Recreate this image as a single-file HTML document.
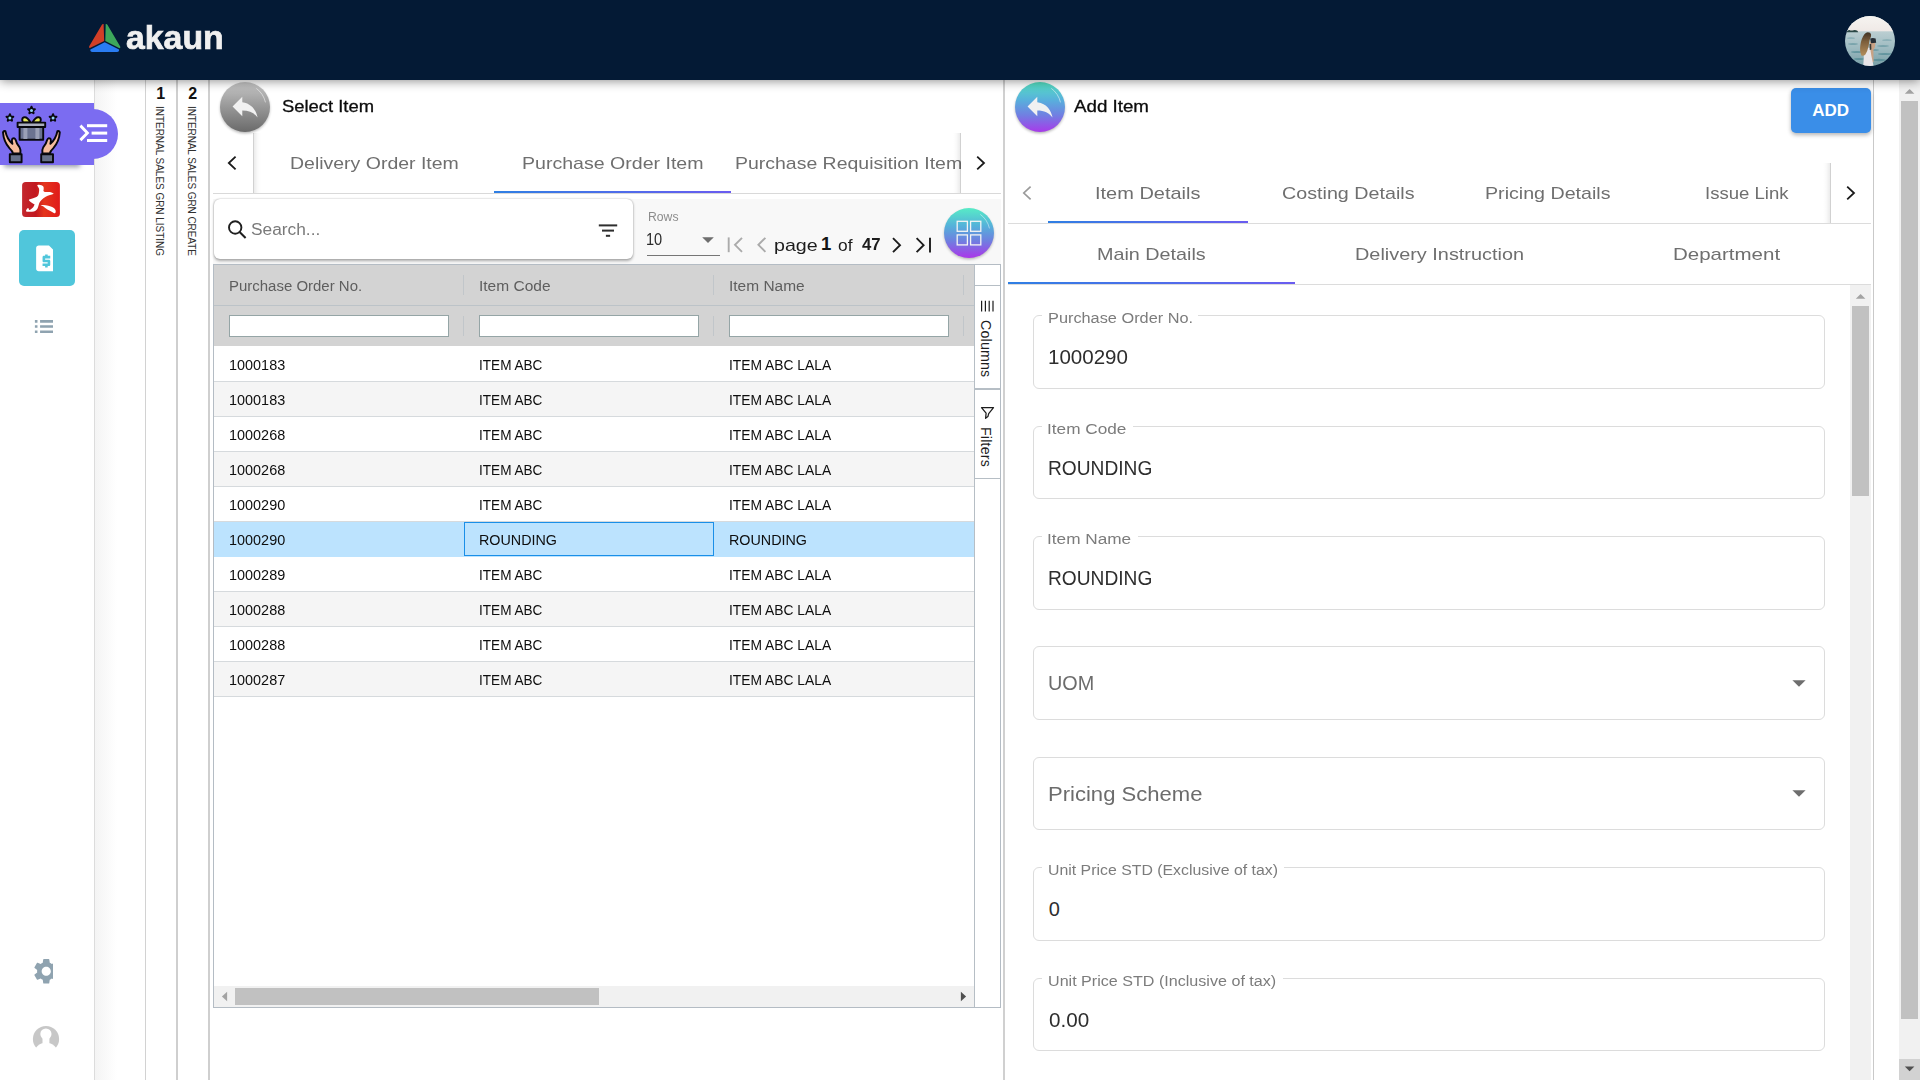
<!DOCTYPE html>
<html lang="en">
<head>
<meta charset="utf-8">
<title>akaun - Internal Sales GRN</title>
<style>
*{box-sizing:border-box;margin:0;padding:0}
html,body{width:1920px;height:1080px;overflow:hidden;background:#fff}
body{position:relative;font-family:"Liberation Sans",sans-serif;color:#222}
.abs{position:absolute}
.t{position:absolute;white-space:nowrap;transform-origin:0 0}
#hdr{left:0;top:0;width:1920px;height:80px;background:#041a35;box-shadow:0 1px 10px rgba(0,0,0,.45);z-index:20}
#side{left:0;top:80px;width:95px;height:1000px;background:#fff;border-right:1px solid #dcdcdc}
#gap{left:95px;top:80px;width:50px;height:1000px;background:linear-gradient(90deg,#f4f4f4 0,#fff 22px)}
.vline{position:absolute;top:80px;height:1000px;background:#cfcfcf}
.vtxt{position:absolute;writing-mode:vertical-rl;white-space:nowrap;font-size:10px;color:#303030;line-height:1}
.vnum{position:absolute;font-weight:700;font-size:16px;color:#111;line-height:1}
.circ{position:absolute;width:50px;height:50px;border-radius:50%;box-shadow:0 2px 4px rgba(0,0,0,.3)}
.hline{position:absolute;height:1px;background:#dcdcdc}
.ink{position:absolute;height:2.4px;background:linear-gradient(90deg,#2f7fe3,#6a5cf0)}
.row{position:absolute;left:214px;width:760px;height:35px;border-bottom:1px solid #d6dadd;background:#fff}
.row.alt{background:#f5f5f5}
.row.sel{background:#bce3fe;border-bottom-color:#bce3fe}
.gsep{position:absolute;width:1px;background:#c1c6ca}
.gin{position:absolute;height:22px;width:220px;background:#fff;border:1px solid #95a5a6}
.fld{position:absolute;left:1033px;width:792px;height:73px;border:1px solid #dcdcdc;border-radius:6px;background:#fff}
.notch{position:absolute;height:3px;background:#fff}
.caret{position:absolute;width:0;height:0;border-left:6.5px solid transparent;border-right:6.5px solid transparent;border-top:6.2px solid #707070}
</style>
</head>
<body>

<!-- ===== HEADER ===== -->
<div id="hdr" class="abs">
  <svg class="abs" style="left:86px;top:20px" width="38" height="36" viewBox="86 20 38 36">
    <path d="M103.600 24 Q102.500 23.700 101.900 24.800 L89.200 46.200 Q88.600 47.700 89.900 47.900 L104.200 41.100 Z" fill="#d23f27"/>
    <path d="M105.700 24 Q106.800 23.700 107.400 24.800 L120.200 46.600 Q120.800 48.100 119.500 48.300 L105.300 41.100 Z" fill="#3da85b"/>
    <path d="M104.700 42.300 L119 49.500 Q119.500 51.900 117 51.900 L92.400 51.900 Q89.900 51.900 90.400 49.500 Z" fill="#2a7cf2"/>
  </svg>
  <div class="t" style="left:125.50px;top:21.37px;font-size:33px;line-height:33px;color:#f0f0f0;transform:scaleX(1.0242);font-weight:700;-webkit-text-stroke:.7px #f0f0f0;">akaun</div>
  <svg class="abs" style="left:1845px;top:16px" width="50" height="50" viewBox="0 0 50 50">
    <defs>
      <clipPath id="avc"><circle cx="25" cy="25" r="25"/></clipPath>
      <linearGradient id="sky" x1="0" y1="0" x2="0" y2="1"><stop offset="0" stop-color="#f6f4f1"/><stop offset="1" stop-color="#efe9e6"/></linearGradient>
      <linearGradient id="sea" x1="0" y1="0" x2="0" y2="1"><stop offset="0" stop-color="#d6e1e2"/><stop offset=".3" stop-color="#bccfd2"/><stop offset=".65" stop-color="#9dbac0"/><stop offset="1" stop-color="#789fa7"/></linearGradient>
      <linearGradient id="hair" x1="0" y1="0" x2="0" y2="1"><stop offset="0" stop-color="#3f3123"/><stop offset=".4" stop-color="#7d5f3c"/><stop offset="1" stop-color="#b38d5b"/></linearGradient>
      <filter id="avb" x="-10%" y="-10%" width="120%" height="120%"><feGaussianBlur stdDeviation=".55"/></filter>
    </defs>
    <g clip-path="url(#avc)">
      <rect width="50" height="50" fill="url(#sea)"/>
      <rect width="50" height="15.300" fill="url(#sky)"/>
      <g filter="url(#avb)">
        <path d="M1.500 16.200 Q2 14 4.500 14 Q6 14.900 7.500 14.400 Q10 13.200 12.400 14.800 L13.200 16.300 Z" fill="#2a4644"/>
        <g fill="#3f7f8a" opacity=".55">
          <ellipse cx="8" cy="28" rx="5" ry=".7"/><ellipse cx="38" cy="30" rx="6" ry=".8"/><ellipse cx="12" cy="36" rx="6" ry="1"/>
          <ellipse cx="40" cy="38" rx="7" ry="1.100"/><ellipse cx="34" cy="44" rx="7" ry="1.200"/><ellipse cx="14" cy="43" rx="5" ry="1"/>
          <ellipse cx="42" cy="24" rx="5" ry=".6"/><ellipse cx="6" cy="22" rx="4" ry=".5"/><ellipse cx="30" cy="34" rx="4" ry=".7"/>
        </g>
        <path d="M27 24 L30.400 26.500 L30 31 L28.400 34 L28.600 46 L25.600 47 L24.600 33 L25 26 Z" fill="#c9a284"/>
        <path d="M18.600 33 Q22 30.500 25.200 32.500 L26.400 40 L28.600 50 L18.200 50 L18.800 42 Z" fill="#e9e5e8"/>
        <path d="M19.600 18 Q22 15.200 25 16.800 Q26.600 17.800 26 20.500 L24.600 24 Q24 27 23.600 30 Q22.600 35 20.400 38.500 Q18.400 40.500 16.400 39.500 Q14.400 35 15.400 29 Q16.400 22 19.600 18 Z" fill="url(#hair)"/>
        <path d="M25.200 22.400 Q28 21.300 30.600 22.600 L31.200 26.800 L26 27.200 Z" fill="#272f36"/>
        <path d="M24.600 28 L26.200 28 L26.400 33.500 L24.800 34 Z" fill="#3a3a36"/>
      </g>
    </g>
  </svg>
</div>

<!-- ===== SIDEBAR ===== -->
<div id="side" class="abs"></div>
<div id="gap" class="abs"></div>
<div class="vline" style="left:145px;width:1px;background:#d2d2d2"></div>
<div class="vline" style="left:176px;width:2px"></div>
<div class="vline" style="left:208px;width:2px"></div>
<div class="vline" style="left:1003px;width:2px;background:#d0d0d0"></div>
<div class="vline" style="left:1873px;width:1px;background:#c9c9c9"></div>
<div class="vnum" style="left:156.2px;top:85.5px">1</div>
<div class="vtxt" style="left:153.9px;top:105.9px;letter-spacing:-0.03px">INTERNAL SALES GRN LISTING</div>
<div class="vnum" style="left:188.3px;top:85.5px">2</div>
<div class="vtxt" style="left:185.5px;top:105.9px;letter-spacing:-0.075px">INTERNAL SALES GRN CREATE</div>
<div class="abs" style="left:4px;top:150px;width:76px;height:15px;box-shadow:0 2px 5px rgba(60,70,95,.55)"></div>
<div class="abs" style="left:68px;top:109px;width:50px;height:50px;border-radius:50%;background:#7b6cf1"></div>
<div class="abs" style="left:0;top:103px;width:94px;height:62px;background:#7b6cf1"></div>
<svg class="abs" style="left:0;top:103px" width="120" height="62" viewBox="0 0 120 62">
  <!-- toggle icon -->
  <g fill="#fff">
    <rect x="87" y="21.2" width="20.2" height="3"/>
    <rect x="91.6" y="28.6" width="15.6" height="3"/>
    <rect x="87" y="36" width="20.2" height="3"/>
    <path d="M81.4 21.6 L89.4 29.9 L81.4 38.2 L79.4 36.1 L85.4 29.9 L79.4 23.7 Z"/>
  </g>
  <!-- gift with hands -->
  <g stroke="#08080e" stroke-width="1.9" stroke-linejoin="round" stroke-linecap="round">
    <path d="M31.50 3.80 L32.41 6.05 L34.83 6.22 L32.97 7.78 L33.56 10.13 L31.50 8.85 L29.44 10.13 L30.03 7.78 L28.17 6.22 L30.59 6.05 Z" fill="#86cdf0" stroke-width="2.1"/>
    <path d="M9.90 11.30 L10.81 13.55 L13.23 13.72 L11.37 15.28 L11.96 17.63 L9.90 16.35 L7.84 17.63 L8.43 15.28 L6.57 13.72 L8.99 13.55 Z" fill="#86cdf0" stroke-width="2.1"/>
    <path d="M53.05 11.30 L53.96 13.55 L56.38 13.72 L54.52 15.28 L55.11 17.63 L53.05 16.35 L50.99 17.63 L51.58 15.28 L49.72 13.72 L52.14 13.55 Z" fill="#86cdf0" stroke-width="2.1"/>
    <path d="M30.600 19.400 Q27 13.200 23.600 14.400 Q21.200 15.800 23 19.400 Z" fill="#e8ea5a"/>
    <path d="M32.400 19.400 Q36 13.200 39.400 14.400 Q41.800 15.800 40 19.400 Z" fill="#e8ea5a"/>
    <rect x="17.6" y="19.6" width="27.6" height="4.4" fill="#a9adbd"/>
    <rect x="19.6" y="24" width="23.6" height="12.8" fill="#6b7390"/>
    <path d="M3 29.4 Q3.6 27.6 5.4 28.2 Q7 36 12.4 40.8 Q11.4 36.6 12.6 35.6 Q14.6 34.6 15.6 36.8 Q16.4 40.6 19.6 44.4 Q21 47 20.4 50.4 L13 50.4 Q12.4 48 9.6 45.4 Q3.6 38.6 3 29.4 Z" fill="#f6bd9c"/>
    <path d="M59.8 29.4 Q59.2 27.6 57.4 28.2 Q55.8 36 50.4 40.8 Q51.4 36.6 50.2 35.6 Q48.2 34.6 47.2 36.8 Q46.4 40.6 43.2 44.4 Q41.8 47 42.4 50.4 L49.8 50.4 Q50.4 48 53.2 45.4 Q59.2 38.6 59.8 29.4 Z" fill="#f6bd9c"/>
    <rect x="9.8" y="51.2" width="11.8" height="8" fill="#667089"/>
    <rect x="41.2" y="51.2" width="11.8" height="8" fill="#667089"/>
  </g>
  <g fill="#8fd2f2"><circle cx="31.500" cy="7.400" r="1.500"/><circle cx="9.900" cy="14.900" r="1.500"/><circle cx="53.050" cy="14.900" r="1.500"/></g>
  <g fill="#9aa0b6"><rect x="23.4" y="25" width="4" height="11"/><rect x="35.4" y="25" width="4" height="11"/></g>
</svg>

<!-- red app icon -->
<svg class="abs" style="left:22px;top:181.600px" width="38" height="36" viewBox="0 0 38 36">
  <defs><linearGradient id="rg" x1="0" y1="0" x2="1" y2="0"><stop offset="0" stop-color="#c3282e"/><stop offset=".36" stop-color="#c2181f"/><stop offset=".58" stop-color="#e4351c"/><stop offset="1" stop-color="#e01a1a"/></linearGradient></defs>
  <rect x=".1" y=".1" width="37.800" height="35" rx="3.600" fill="url(#rg)"/>
  <path d="M15.200 3.400 Q15.500 2.400 17 2.700 L19.500 3.200 Q21.300 3.800 21.600 4.900 Q21.900 6.800 21.400 8.700 Q21.600 9.800 22.900 10 L28 10 Q30.400 10.500 31.800 11.700 Q30 12.500 28 13 Q25.600 13.700 23.700 14.700 Q21.200 16.200 19.500 18.100 Q18 19.600 17.300 21.100 Q16.700 23 16.100 24.900 Q15.600 26.800 14.400 27.900 Q13.200 29 11.800 29.400 Q10 29.800 8 29.800 L4.600 29.800 Q3.800 29.200 4.100 28.300 L5.200 26.600 Q5.900 25.900 6.500 26.200 L7.100 28.100 Q8.300 27.800 9.200 27 Q10.500 26 11.400 24.900 L12.600 22.600 Q11.200 21.600 10.100 21.100 Q8.500 20.200 7.500 19 Q6.700 18.200 6.900 17.700 Q7.700 17.200 8.800 17 Q11.200 16.400 13.100 15.500 Q15.200 14.600 16.100 13.400 Q16.800 12 16.900 10.400 Q17.300 8.600 17.100 7 Q16.800 5.800 16.100 4.900 Z" fill="#fff"/>
  <path d="M18.400 23.200 Q21 22.800 23.700 23.200 Q26.400 23.600 28.800 24.500 Q30.800 25.200 32.200 26.200 Q33.400 27.300 33.700 28.700 Q33.900 30 33.300 30.900 Q32.600 31.400 31.800 31.100 L28.800 29.200 L25.400 27.500 Q23.600 26.300 22 24.900 Q21.200 24.400 20.300 24.100 Z" fill="#fff"/>
</svg>

<!-- teal doc tile -->
<div class="abs" style="left:19px;top:230px;width:56px;height:56px;border-radius:5px;background:#50c6db"></div>
<div class="abs" style="left:30.700px;top:242.900px;width:22.400px;height:32px;overflow:hidden">
<svg class="abs" style="left:0;top:0" width="30.800" height="30.800" viewBox="0 0 24 24">
  <path fill="#fff" d="M14 2H6c-1.100 0-2 .9-2 2v16c0 1.100.9 2 2 2h12c1.100 0 2-.9 2-2V8l-6-6zm1 10h-4v1h3c.55 0 1 .45 1 1v3c0 .55-.45 1-1 1h-1v1h-2v-1H9v-2h4v-1h-3c-.55 0-1-.45-1-1v-3c0-.55.45-1 1-1h1V9h2v1h2v2z"/>
</svg>
</div>

<!-- list icon -->
<div class="abs" style="left:30.600px;top:310.700px;width:22.500px;height:32px;overflow:hidden">
<svg class="abs" style="left:0;top:0" width="31.100" height="31.100" viewBox="0 0 24 24">
  <path fill="#8fa3b0" d="M3 13h2v-2H3v2zm0 4h2v-2H3v2zm0-8h2V7H3v2zm4 4h14v-2H7v2zm0 4h14v-2H7v2zM7 7v2h14V7H7z"/>
</svg>
</div>

<!-- gear -->
<div class="abs" style="left:30.600px;top:955.700px;width:22.500px;height:31px;overflow:hidden">
<svg class="abs" style="left:0;top:0" width="30.500" height="30.500" viewBox="0 0 24 24">
  <path fill="#8fa3b0" d="M19.14 12.94c.04-.3.06-.61.06-.94 0-.32-.02-.64-.07-.94l2.03-1.58a.49.49 0 0 0 .12-.61l-1.92-3.32a.488.488 0 0 0-.59-.22l-2.39.96c-.5-.38-1.03-.7-1.62-.94l-.36-2.54a.484.484 0 0 0-.48-.41h-3.84c-.24 0-.43.17-.47.41l-.36 2.54c-.59.24-1.13.57-1.62.94l-2.39-.96c-.22-.08-.47 0-.59.22L2.74 8.87c-.12.21-.08.47.12.61l2.03 1.58c-.05.3-.09.63-.09.94s.02.64.07.94l-2.03 1.58a.49.49 0 0 0-.12.61l1.92 3.32c.12.22.37.29.59.22l2.39-.96c.5.38 1.03.7 1.62.94l.36 2.54c.05.24.24.41.48.41h3.84c.24 0 .44-.17.47-.41l.36-2.54c.59-.24 1.13-.56 1.62-.94l2.39.96c.22.08.47 0 .59-.22l1.92-3.32c.12-.22.07-.47-.12-.61l-2.01-1.58zM12 15.6c-1.98 0-3.600-1.620-3.600-3.600s1.620-3.600 3.600-3.600 3.600 1.620 3.600 3.600-1.620 3.600-3.600 3.600z"/>
</svg>
</div>

<!-- user -->
<svg class="abs" style="left:32px;top:1025px" width="28" height="24" viewBox="32 1025 28 24">
  <defs><clipPath id="uc"><rect x="32" y="1025" width="28" height="22.900"/></clipPath></defs>
  <g clip-path="url(#uc)">
    <circle cx="46" cy="1039" r="13.100" fill="#c7c7c7"/>
    <circle cx="45.900" cy="1034" r="5.600" fill="#fff"/>
    <rect x="42.500" y="1036" width="6.900" height="9" fill="#fff"/>
    <ellipse cx="46" cy="1054" rx="12" ry="11.200" fill="#fff"/>
  </g>
</svg>

<!-- ===== LEFT PANEL : SELECT ITEM ===== -->
<div class="abs" style="left:213px;top:199px;width:788px;height:66px;background:#f8f8f8"></div>
<svg class="abs" style="left:216px;top:79px" width="58" height="60" viewBox="0 0 58 60">
  <defs><linearGradient id="gbk" x1="0" y1="0" x2="0" y2="1"><stop offset="0" stop-color="#c6c6c6"/><stop offset="0.45" stop-color="#9c9c9c"/><stop offset="1" stop-color="#6a6a6a"/></linearGradient>
  <filter id="gbks" x="-20%" y="-20%" width="140%" height="150%"><feGaussianBlur stdDeviation="1.6"/></filter></defs>
  <circle cx="29" cy="29.6" r="24.6" fill="#000" opacity=".32" filter="url(#gbks)"/>
  <circle cx="29" cy="28" r="25" fill="url(#gbk)"/>
  <path d="M40.6 9.6 Q47.4 14.6 49.4 23" fill="none" stroke="#fff" stroke-opacity=".5" stroke-width="1" stroke-linecap="round"/>
  <g transform="translate(12.4 10.8) scale(1.389)"><path d="M10 9V5l-7 7 7 7v-4.1c5 0 8.5 1.6 11 5.1-1-5-4-10-11-11z" fill="#f1f1f1"/></g>
</svg>

<div class="t" style="left:282.20px;top:98.01px;font-size:17px;line-height:17px;color:#0c0c0c;transform:scaleX(1.0816);-webkit-text-stroke:.3px #0c0c0c;">Select Item</div>
<div class="hline" style="left:213px;top:193px;width:788px;background:#d9d9d9"></div>
<div class="abs" style="left:252.800px;top:133px;width:8px;height:60px;background:linear-gradient(90deg,rgba(0,0,0,.24),rgba(0,0,0,.07) 18%,rgba(0,0,0,.02) 60%,rgba(0,0,0,0))"></div>
<svg class="abs" style="left:226px;top:155px" width="12" height="16" viewBox="0 0 12 16"><path d="M9.6 1.6 L2.8 8 L9.6 14.4" fill="none" stroke="#1a1a1a" stroke-width="1.8"/></svg>
<div class="t" style="left:290.35px;top:154.61px;font-size:17px;line-height:17px;color:#6f6f6f;transform:scaleX(1.1457);">Delivery Order Item</div>
<div class="t" style="left:521.60px;top:154.61px;font-size:17px;line-height:17px;color:#6f6f6f;transform:scaleX(1.1502);">Purchase Order Item</div>
<div class="abs" style="left:720px;top:140px;width:241px;height:50px;overflow:hidden"><div class="t" style="left:15.16px;top:14.61px;font-size:17px;line-height:17px;color:#6f6f6f;transform:scaleX(1.1446);">Purchase Requisition Item</div></div>
<div class="ink" style="left:494px;top:190.8px;width:237.4px"></div>
<div class="abs" style="left:953.200px;top:133px;width:8px;height:60px;background:linear-gradient(270deg,rgba(0,0,0,.24),rgba(0,0,0,.07) 18%,rgba(0,0,0,.02) 60%,rgba(0,0,0,0))"></div>
<div class="abs" style="left:961.200px;top:133px;width:39.800px;height:60px;background:#fff"></div>
<svg class="abs" style="left:974px;top:155px" width="13" height="16" viewBox="0 0 13 16"><path d="M3.2 1.6 L10 8 L3.2 14.4" fill="none" stroke="#1a1a1a" stroke-width="1.8"/></svg>
<div class="abs" style="left:214px;top:198.6px;width:419.4px;height:60.8px;background:#fff;border-radius:6px;box-shadow:0 1.5px 3px rgba(0,0,0,.3),0 0 1.5px rgba(0,0,0,.25)"></div>
<svg class="abs" style="left:226px;top:218px" width="22" height="22" viewBox="0 0 22 22"><circle cx="9.2" cy="9.5" r="6.2" fill="none" stroke="#1f1f1f" stroke-width="1.9"/><path d="M13.6 14 L19.6 20" stroke="#1f1f1f" stroke-width="2.1" fill="none"/></svg>
<div class="t" style="left:250.80px;top:222.06px;font-size:16px;line-height:16px;color:#7a7a7a;transform:scaleX(1.0817);">Search...</div>
<svg class="abs" style="left:598px;top:223px" width="20" height="15" viewBox="0 0 20 15"><g fill="#2e2e2e"><rect x=".8" y="1.4" width="18.4" height="2"/><rect x="4" y="6.6" width="12" height="2"/><rect x="7.9" y="11.8" width="4.2" height="2"/></g></svg>
<div class="t" style="left:647.50px;top:210.84px;font-size:12px;line-height:12px;color:#8c8c8c;transform:scaleX(1.0165);">Rows</div>
<div class="t" style="left:646.09px;top:232.06px;font-size:16px;line-height:16px;color:#2b2b2b;transform:scaleX(0.9113);">10</div>
<svg class="abs" style="left:701px;top:236px" width="14" height="8" viewBox="0 0 14 8"><path d="M1.200 1.200 H12.800 L7 7 Z" fill="#6e6e6e"/></svg>
<div class="abs" style="left:647.4px;top:254.9px;width:72.6px;height:1px;background:#767676"></div>
<svg class="abs" style="left:725px;top:235px" width="210" height="20" viewBox="0 0 210 20">
  <g fill="none" stroke="#ababab" stroke-width="1.9">
    <path d="M3.7 2.4 V17.2"/><path d="M17 2.8 L10 9.8 L17 16.8"/>
    <path d="M40.4 2.8 L33.4 9.8 L40.4 16.8"/>
  </g>
  <g fill="none" stroke="#1c1c1c" stroke-width="1.9">
    <path d="M168 3.2 L175 10.2 L168 17.2"/>
    <path d="M191.600 3.200 L198.600 10.200 L191.600 17.200"/><path d="M205 2.800 V17.600"/>
  </g>
</svg>
<div class="t" style="left:773.85px;top:236.61px;font-size:17px;line-height:17px;color:#1c1c1c;transform:scaleX(1.1550);">page</div>
<div class="t" style="left:821.00px;top:235.14px;font-size:18.5px;line-height:18.5px;color:#141414;font-weight:700;">1</div>
<div class="t" style="left:838.00px;top:236.61px;font-size:17px;line-height:17px;color:#1c1c1c;transform:scaleX(1.0204);">of</div>
<div class="t" style="left:862.25px;top:237.46px;font-size:16px;line-height:16px;color:#1c1c1c;transform:scaleX(1.0476);font-weight:700;">47</div>
<svg class="abs" style="left:940px;top:205px" width="58" height="60" viewBox="0 0 58 60">
  <defs><linearGradient id="ggr" x1="0" y1="0" x2="0" y2="1"><stop offset="0" stop-color="#57ecc6"/><stop offset=".36" stop-color="#55b1da"/><stop offset=".66" stop-color="#6f7fe0"/><stop offset="1" stop-color="#ab36ea"/></linearGradient>
  <filter id="ggs" x="-20%" y="-20%" width="140%" height="150%"><feGaussianBlur stdDeviation="1.6"/></filter></defs>
  <circle cx="29" cy="29.6" r="24.6" fill="#000" opacity=".3" filter="url(#ggs)"/>
  <circle cx="29" cy="28" r="25" fill="url(#ggr)"/>
  <path d="M40.6 9.6 Q47.4 14.6 49.4 23" fill="none" stroke="#fff" stroke-opacity=".45" stroke-width="1" stroke-linecap="round"/>
  <g fill="none" stroke="#f4f4f4" stroke-width="1.3">
    <rect x="17.2" y="16.3" width="10.2" height="10"/><rect x="30.6" y="16.3" width="10.2" height="10"/>
    <rect x="17.2" y="29.900" width="10.2" height="10"/><rect x="30.6" y="29.900" width="10.2" height="10"/>
  </g>
</svg>
<div class="abs" style="left:213.0px;top:263.9px;width:787.9px;height:743.9px;border:1px solid #b4bcc4;background:#fff"></div>
<div class="abs" style="left:214px;top:264.9px;width:760.2px;height:81.6px;background:#d3d3d3"></div>
<div class="abs" style="left:214px;top:305px;width:760.2px;height:1px;background:#bcc3c8"></div>
<div class="t" style="left:228.73px;top:278.56px;font-size:14.7px;line-height:14.7px;color:#5e5e5e;transform:scaleX(1.0192);">Purchase Order No.</div>
<div class="gin" style="left:229.05px;top:314.9px"></div>
<div class="t" style="left:478.69px;top:278.56px;font-size:14.7px;line-height:14.7px;color:#5e5e5e;transform:scaleX(1.0557);">Item Code</div>
<div class="gin" style="left:479.05px;top:314.9px"></div>
<div class="t" style="left:728.70px;top:278.56px;font-size:14.7px;line-height:14.7px;color:#5e5e5e;transform:scaleX(1.0530);">Item Name</div>
<div class="gin" style="left:729.05px;top:314.9px"></div>
<div class="gsep" style="left:463px;top:275.3px;height:19.6px"></div>
<div class="gsep" style="left:463px;top:316px;height:19.600px"></div>
<div class="gsep" style="left:713px;top:275.3px;height:19.6px"></div>
<div class="gsep" style="left:713px;top:316px;height:19.600px"></div>
<div class="gsep" style="left:963px;top:275.3px;height:19.6px"></div>
<div class="gsep" style="left:963px;top:316px;height:19.600px"></div>
<div class="row" style="left:214px;top:346.50px"></div>
<div class="t" style="left:228.54px;top:357.30px;font-size:15px;line-height:15px;color:#0e0e0e;transform:scaleX(0.9623);">1000183</div>
<div class="t" style="left:478.69px;top:357.30px;font-size:15px;line-height:15px;color:#0e0e0e;transform:scaleX(0.9056);">ITEM ABC</div>
<div class="t" style="left:728.68px;top:357.30px;font-size:15px;line-height:15px;color:#0e0e0e;transform:scaleX(0.9214);">ITEM ABC LALA</div>
<div class="row alt" style="left:214px;top:381.50px"></div>
<div class="t" style="left:228.54px;top:392.30px;font-size:15px;line-height:15px;color:#0e0e0e;transform:scaleX(0.9623);">1000183</div>
<div class="t" style="left:478.69px;top:392.30px;font-size:15px;line-height:15px;color:#0e0e0e;transform:scaleX(0.9056);">ITEM ABC</div>
<div class="t" style="left:728.68px;top:392.30px;font-size:15px;line-height:15px;color:#0e0e0e;transform:scaleX(0.9214);">ITEM ABC LALA</div>
<div class="row" style="left:214px;top:416.50px"></div>
<div class="t" style="left:228.54px;top:427.30px;font-size:15px;line-height:15px;color:#0e0e0e;transform:scaleX(0.9623);">1000268</div>
<div class="t" style="left:478.69px;top:427.30px;font-size:15px;line-height:15px;color:#0e0e0e;transform:scaleX(0.9056);">ITEM ABC</div>
<div class="t" style="left:728.68px;top:427.30px;font-size:15px;line-height:15px;color:#0e0e0e;transform:scaleX(0.9214);">ITEM ABC LALA</div>
<div class="row alt" style="left:214px;top:451.50px"></div>
<div class="t" style="left:228.54px;top:462.30px;font-size:15px;line-height:15px;color:#0e0e0e;transform:scaleX(0.9623);">1000268</div>
<div class="t" style="left:478.69px;top:462.30px;font-size:15px;line-height:15px;color:#0e0e0e;transform:scaleX(0.9056);">ITEM ABC</div>
<div class="t" style="left:728.68px;top:462.30px;font-size:15px;line-height:15px;color:#0e0e0e;transform:scaleX(0.9214);">ITEM ABC LALA</div>
<div class="row" style="left:214px;top:486.50px"></div>
<div class="t" style="left:228.54px;top:497.30px;font-size:15px;line-height:15px;color:#0e0e0e;transform:scaleX(0.9623);">1000290</div>
<div class="t" style="left:478.69px;top:497.30px;font-size:15px;line-height:15px;color:#0e0e0e;transform:scaleX(0.9056);">ITEM ABC</div>
<div class="t" style="left:728.68px;top:497.30px;font-size:15px;line-height:15px;color:#0e0e0e;transform:scaleX(0.9214);">ITEM ABC LALA</div>
<div class="row alt sel" style="left:214px;top:521.50px"></div>
<div class="abs" style="left:464px;top:521.80px;width:250px;height:34.4px;border:1px solid #1a8fe8"></div>
<div class="t" style="left:228.54px;top:532.30px;font-size:15px;line-height:15px;color:#0e0e0e;transform:scaleX(0.9623);">1000290</div>
<div class="t" style="left:478.64px;top:532.30px;font-size:15px;line-height:15px;color:#0e0e0e;transform:scaleX(0.9550);">ROUNDING</div>
<div class="t" style="left:728.64px;top:532.30px;font-size:15px;line-height:15px;color:#0e0e0e;transform:scaleX(0.9550);">ROUNDING</div>
<div class="row" style="left:214px;top:556.50px"></div>
<div class="t" style="left:228.54px;top:567.30px;font-size:15px;line-height:15px;color:#0e0e0e;transform:scaleX(0.9623);">1000289</div>
<div class="t" style="left:478.69px;top:567.30px;font-size:15px;line-height:15px;color:#0e0e0e;transform:scaleX(0.9056);">ITEM ABC</div>
<div class="t" style="left:728.68px;top:567.30px;font-size:15px;line-height:15px;color:#0e0e0e;transform:scaleX(0.9214);">ITEM ABC LALA</div>
<div class="row alt" style="left:214px;top:591.50px"></div>
<div class="t" style="left:228.54px;top:602.30px;font-size:15px;line-height:15px;color:#0e0e0e;transform:scaleX(0.9623);">1000288</div>
<div class="t" style="left:478.69px;top:602.30px;font-size:15px;line-height:15px;color:#0e0e0e;transform:scaleX(0.9056);">ITEM ABC</div>
<div class="t" style="left:728.68px;top:602.30px;font-size:15px;line-height:15px;color:#0e0e0e;transform:scaleX(0.9214);">ITEM ABC LALA</div>
<div class="row" style="left:214px;top:626.50px"></div>
<div class="t" style="left:228.54px;top:637.30px;font-size:15px;line-height:15px;color:#0e0e0e;transform:scaleX(0.9623);">1000288</div>
<div class="t" style="left:478.69px;top:637.30px;font-size:15px;line-height:15px;color:#0e0e0e;transform:scaleX(0.9056);">ITEM ABC</div>
<div class="t" style="left:728.68px;top:637.30px;font-size:15px;line-height:15px;color:#0e0e0e;transform:scaleX(0.9214);">ITEM ABC LALA</div>
<div class="row alt" style="left:214px;top:661.50px"></div>
<div class="t" style="left:228.54px;top:672.30px;font-size:15px;line-height:15px;color:#0e0e0e;transform:scaleX(0.9623);">1000287</div>
<div class="t" style="left:478.69px;top:672.30px;font-size:15px;line-height:15px;color:#0e0e0e;transform:scaleX(0.9056);">ITEM ABC</div>
<div class="t" style="left:728.68px;top:672.30px;font-size:15px;line-height:15px;color:#0e0e0e;transform:scaleX(0.9214);">ITEM ABC LALA</div>
<div class="abs" style="left:214px;top:986px;width:760.2px;height:20.8px;background:#f1f1f1"></div>
<div class="abs" style="left:235px;top:988.2px;width:363.8px;height:16.4px;background:#c1c1c1"></div>
<svg class="abs" style="left:220px;top:990px" width="10" height="12" viewBox="0 0 10 12"><path d="M7.100 1.800 L1.900 6.500 L7.100 11.200 Z" fill="#a3a3a3"/></svg>
<svg class="abs" style="left:958px;top:990px" width="10" height="12" viewBox="0 0 10 12"><path d="M2.900 1.800 L8.100 6.500 L2.900 11.200 Z" fill="#505050"/></svg>
<div class="abs" style="left:974.2px;top:265.2px;width:1px;height:741.6px;background:#b6bec5"></div>
<div class="abs" style="left:975.2px;top:285.2px;width:25px;height:1px;background:#b6bec5"></div>
<div class="abs" style="left:975.2px;top:388px;width:25px;height:1.6px;background:#b6bec5"></div>
<div class="abs" style="left:975.2px;top:478.2px;width:25px;height:1px;background:#b6bec5"></div>
<svg class="abs" style="left:980px;top:300px" width="15" height="12" viewBox="0 0 15 12"><g stroke="#1c1c1c" stroke-width="1.2" fill="none"><path d="M1.6 .8 V11.400 M5.400 .8 V11.400 M9.200 .8 V11.400 M13 .8 V11.400"/></g></svg>
<div class="abs" style="left:977.8px;top:320.2px;width:15px;height:58px;writing-mode:vertical-rl;font-size:14.2px;line-height:15px;color:#1e1e1e;white-space:nowrap;letter-spacing:.2px">Columns</div>
<svg class="abs" style="left:980px;top:405.700px" width="15" height="14" viewBox="0 0 15 14"><path d="M1.500 1.700 H13.500 L8.700 7.600 L7.900 10.600 L5.600 12.300 L6.100 7.200 Z" fill="none" stroke="#1c1c1c" stroke-width="1.250" stroke-linejoin="round"/></svg>
<div class="abs" style="left:977.8px;top:427.100px;width:15px;height:40px;writing-mode:vertical-rl;font-size:14.2px;line-height:15px;color:#1e1e1e;white-space:nowrap;letter-spacing:.2px">Filters</div>

<!-- ===== RIGHT PANEL : ADD ITEM ===== -->
<svg class="abs" style="left:1011px;top:79px" width="58" height="60" viewBox="0 0 58 60">
  <defs><linearGradient id="gad" x1="0" y1="0" x2="0" y2="1"><stop offset="0" stop-color="#55e0c2"/><stop offset="0.36" stop-color="#58b0dc"/><stop offset="0.66" stop-color="#7080e2"/><stop offset="1" stop-color="#a83aea"/></linearGradient>
  <filter id="gads" x="-20%" y="-20%" width="140%" height="150%"><feGaussianBlur stdDeviation="1.6"/></filter></defs>
  <circle cx="29" cy="29.6" r="24.6" fill="#000" opacity=".32" filter="url(#gads)"/>
  <circle cx="29" cy="28" r="25" fill="url(#gad)"/>
  <path d="M40.6 9.6 Q47.4 14.6 49.4 23" fill="none" stroke="#fff" stroke-opacity=".5" stroke-width="1" stroke-linecap="round"/>
  <g transform="translate(12.4 10.8) scale(1.389)"><path d="M10 9V5l-7 7 7 7v-4.1c5 0 8.5 1.6 11 5.1-1-5-4-10-11-11z" fill="#f1f1f1"/></g>
</svg>

<div class="t" style="left:1073.50px;top:98.01px;font-size:17px;line-height:17px;color:#0c0c0c;transform:scaleX(1.1006);-webkit-text-stroke:.3px #0c0c0c;">Add Item</div>
<div class="abs" style="left:1791px;top:88px;width:80px;height:45px;border-radius:5px;background:#3a8ee8;box-shadow:0 2px 4px rgba(0,0,0,.3)"></div>
<div class="t" style="left:1812.20px;top:101.81px;font-size:17px;line-height:17px;color:#fff;font-weight:700;">ADD</div>
<div class="hline" style="left:1008px;top:223px;width:863px"></div>
<svg class="abs" style="left:1021px;top:185px" width="12" height="16" viewBox="0 0 12 16"><path d="M9.6 1.6 L2.800 8 L9.6 14.400" fill="none" stroke="#9a9a9a" stroke-width="1.7"/></svg>
<div class="t" style="left:1094.82px;top:184.61px;font-size:17px;line-height:17px;color:#6f6f6f;transform:scaleX(1.1751);">Item Details</div>
<div class="t" style="left:1281.75px;top:184.61px;font-size:17px;line-height:17px;color:#6f6f6f;transform:scaleX(1.1592);">Costing Details</div>
<div class="t" style="left:1485.10px;top:184.61px;font-size:17px;line-height:17px;color:#6f6f6f;transform:scaleX(1.1549);">Pricing Details</div>
<div class="t" style="left:1705.16px;top:184.61px;font-size:17px;line-height:17px;color:#6f6f6f;transform:scaleX(1.0915);">Issue Link</div>
<div class="ink" style="left:1048px;top:220.8px;width:200px"></div>
<div class="abs" style="left:1823px;top:163px;width:8px;height:60px;background:linear-gradient(270deg,rgba(0,0,0,.24),rgba(0,0,0,.07) 18%,rgba(0,0,0,.02) 60%,rgba(0,0,0,0))"></div>
<svg class="abs" style="left:1844px;top:185px" width="13" height="16" viewBox="0 0 13 16"><path d="M3.200 1.6 L10 8 L3.200 14.400" fill="none" stroke="#1a1a1a" stroke-width="1.8"/></svg>
<div class="hline" style="left:1008px;top:284px;width:863px"></div>
<div class="t" style="left:1096.84px;top:245.81px;font-size:17px;line-height:17px;color:#6f6f6f;transform:scaleX(1.1626);">Main Details</div>
<div class="t" style="left:1354.53px;top:245.81px;font-size:17px;line-height:17px;color:#6f6f6f;transform:scaleX(1.1692);">Delivery Instruction</div>
<div class="t" style="left:1672.54px;top:245.81px;font-size:17px;line-height:17px;color:#6f6f6f;transform:scaleX(1.2061);">Department</div>
<div class="ink" style="left:1008px;top:281.8px;width:287.2px"></div>
<div class="abs" style="left:1850px;top:285px;width:20.8px;height:795px;background:#f1f1f1"></div>
<div class="abs" style="left:1852px;top:306.2px;width:17px;height:189.6px;background:#c1c1c1"></div>
<svg class="abs" style="left:1855px;top:292px" width="12" height="8" viewBox="0 0 12 8"><path d="M.8 6.800 L5.600 2 L10.400 6.800 Z" fill="#a3a3a3"/></svg>
<div class="abs" style="left:1899px;top:80px;width:21px;height:1000px;background:#f1f1f1"></div>
<div class="abs" style="left:1901.2px;top:101px;width:16.8px;height:918px;background:#c1c1c1"></div>
<svg class="abs" style="left:1904px;top:87px" width="12" height="8" viewBox="0 0 12 8"><path d="M.8 6.800 L5.600 2 L10.400 6.800 Z" fill="#a3a3a3"/></svg>
<div class="abs" style="left:1899px;top:1059px;width:21px;height:21px;background:#d2d2d2"></div>
<svg class="abs" style="left:1904px;top:1065px" width="12" height="8" viewBox="0 0 12 8"><path d="M.8 1.400 L5.600 6.200 L10.400 1.400 Z" fill="#505050"/></svg>
<div class="fld" style="top:315.00px;height:73.90px"></div>
<div class="notch" style="left:1042px;top:314.00px;width:156.2px"></div>
<div class="t" style="left:1047.54px;top:310.06px;font-size:15.4px;line-height:15.4px;color:#7c7c7c;transform:scaleX(1.0599);">Purchase Order No.</div>
<div class="t" style="left:1047.77px;top:346.87px;font-size:20px;line-height:20px;color:#2e2e2e;transform:scaleX(1.0269);">1000290</div>
<div class="fld" style="top:425.90px;height:73.00px"></div>
<div class="notch" style="left:1042px;top:424.90px;width:91.2px"></div>
<div class="t" style="left:1047.48px;top:420.71px;font-size:15.4px;line-height:15.4px;color:#7c7c7c;transform:scaleX(1.1182);">Item Code</div>
<div class="t" style="left:1047.84px;top:458.07px;font-size:20px;line-height:20px;color:#2e2e2e;transform:scaleX(0.9578);">ROUNDING</div>
<div class="fld" style="top:535.90px;height:74.00px"></div>
<div class="notch" style="left:1042px;top:534.90px;width:96.0px"></div>
<div class="t" style="left:1047.48px;top:530.71px;font-size:15.4px;line-height:15.4px;color:#7c7c7c;transform:scaleX(1.1180);">Item Name</div>
<div class="t" style="left:1047.84px;top:568.07px;font-size:20px;line-height:20px;color:#2e2e2e;transform:scaleX(0.9578);">ROUNDING</div>
<div class="fld" style="top:645.90px;height:74.00px"></div>
<div class="t" style="left:1047.76px;top:673.07px;font-size:20px;line-height:20px;color:#6c6c6c;transform:scaleX(0.9900);">UOM</div>
<svg class="abs" style="left:1791px;top:678.7px" width="16" height="9" viewBox="0 0 16 9"><path d="M1.400 1.300 H14.600 L8 7.700 Z" fill="#6e6e6e"/></svg>
<div class="fld" style="top:756.75px;height:73.15px"></div>
<div class="t" style="left:1047.65px;top:784.07px;font-size:20px;line-height:20px;color:#6c6c6c;transform:scaleX(1.1023);">Pricing Scheme</div>
<svg class="abs" style="left:1791px;top:789.1px" width="16" height="9" viewBox="0 0 16 9"><path d="M1.400 1.300 H14.600 L8 7.700 Z" fill="#6e6e6e"/></svg>
<div class="fld" style="top:867.00px;height:73.90px"></div>
<div class="notch" style="left:1042px;top:866.00px;width:242.4px"></div>
<div class="t" style="left:1047.57px;top:862.06px;font-size:15.4px;line-height:15.4px;color:#7c7c7c;transform:scaleX(1.0302);">Unit Price STD (Exclusive of tax)</div>
<div class="t" style="left:1048.80px;top:898.67px;font-size:20px;line-height:20px;color:#2e2e2e;">0</div>
<div class="fld" style="top:978.00px;height:72.90px"></div>
<div class="notch" style="left:1042px;top:977.00px;width:240.6px"></div>
<div class="t" style="left:1047.55px;top:972.96px;font-size:15.4px;line-height:15.4px;color:#7c7c7c;transform:scaleX(1.0462);">Unit Price STD (Inclusive of tax)</div>
<div class="t" style="left:1048.80px;top:1009.87px;font-size:20px;line-height:20px;color:#2e2e2e;transform:scaleX(1.0309);">0.00</div>

</body>
</html>
